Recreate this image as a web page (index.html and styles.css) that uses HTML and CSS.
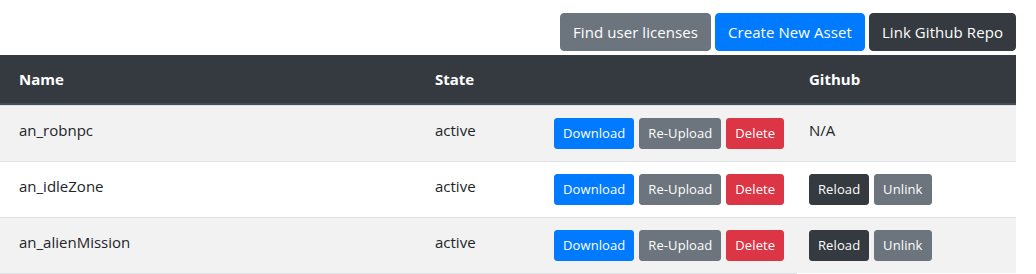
FILE: index.html
```html
<!DOCTYPE html>
<html lang="en">
<head>
    <meta charset="UTF-8">
    <title>Assets</title>
    <link rel="stylesheet" href="styles.css">
</head>
<body>
    <div class="page">
        <div class="toolbar">
            <button class="btn btn-secondary">Find user licenses</button>
            <button class="btn btn-primary">Create New Asset</button>
            <button class="btn btn-dark">Link Github Repo</button>
        </div>

        <table class="assets">
            <colgroup>
                <col class="col-name">
                <col class="col-state">
                <col class="col-actions">
                <col class="col-github">
            </colgroup>
            <thead>
                <tr>
                    <th>Name</th>
                    <th>State</th>
                    <th></th>
                    <th>Github</th>
                </tr>
            </thead>
            <tbody>
                <tr>
                    <td>an_robnpc</td>
                    <td>active</td>
                    <td class="actions">
                        <button class="btn btn-sm btn-primary">Download</button>
                        <button class="btn btn-sm btn-secondary">Re-Upload</button>
                        <button class="btn btn-sm btn-danger">Delete</button>
                    </td>
                    <td>N/A</td>
                </tr>
                <tr>
                    <td>an_idleZone</td>
                    <td>active</td>
                    <td class="actions">
                        <button class="btn btn-sm btn-primary">Download</button>
                        <button class="btn btn-sm btn-secondary">Re-Upload</button>
                        <button class="btn btn-sm btn-danger">Delete</button>
                    </td>
                    <td class="actions">
                        <button class="btn btn-sm btn-dark">Reload</button>
                        <button class="btn btn-sm btn-secondary">Unlink</button>
                    </td>
                </tr>
                <tr>
                    <td>an_alienMission</td>
                    <td>active</td>
                    <td class="actions">
                        <button class="btn btn-sm btn-primary">Download</button>
                        <button class="btn btn-sm btn-secondary">Re-Upload</button>
                        <button class="btn btn-sm btn-danger">Delete</button>
                    </td>
                    <td class="actions">
                        <button class="btn btn-sm btn-dark">Reload</button>
                        <button class="btn btn-sm btn-secondary">Unlink</button>
                    </td>
                </tr>
            </tbody>
        </table>
        <div class="scroll-edge"></div>
    </div>
</body>
</html>
```

FILE: styles.css
```css
/* General */
body {
    margin: 0;
    padding: 0;
    font-family: "Open Sans", "Noto Sans", sans-serif;
    font-size: 16px;
    line-height: 1.5;
    color: #212529;
    background-color: #fff;
}

.page {
    width: 1016px;
}

/* Buttons */
.btn {
    display: inline-block;
    font-family: inherit;
    font-size: 15px;
    line-height: 24px;
    padding: 6px 12px;
    border: 1px solid transparent;
    border-radius: 4px;
    color: #fff;
    cursor: pointer;
}

.btn-sm {
    font-size: 13px;
    line-height: 21px;
    padding: 4px 8px;
    border-radius: 3px;
}

.btn-primary {
    background-color: #007bff;
    border-color: #007bff;
}

.btn-secondary {
    background-color: #6c757d;
    border-color: #6c757d;
}

.btn-dark {
    background-color: #343a40;
    border-color: #343a40;
}

.btn-danger {
    background-color: #dc3545;
    border-color: #dc3545;
}

/* Top toolbar */
.toolbar {
    display: flex;
    justify-content: flex-end;
    gap: 4px;
    padding-top: 13px;
    margin-bottom: 4px;
}

.toolbar .btn {
    letter-spacing: 0.07px;
}

/* Table */
.assets {
    width: 1016px;
    border-collapse: separate;
    border-spacing: 0;
    table-layout: fixed;
}

.col-name { width: 416px; }
.col-state { width: 119px; }
.col-actions { width: 255px; }
.col-github { width: 226px; }

.assets th,
.assets td {
    padding: 12px 6px 12px 19px;
    text-align: left;
    vertical-align: top;
    font-size: 15px;
    line-height: 24px;
}

.assets th {
    background-color: #343a40;
    color: #fff;
    font-weight: 700;
    border-bottom: 2px solid #454d55;
}

.assets td {
    border-top: 1px solid #dee2e6;
}

.assets tbody tr:nth-child(odd) {
    background-color: #f2f2f2;
}

.assets td.actions {
    line-height: 0;
    white-space: nowrap;
    padding-right: 0;
}

.actions .btn {
    margin-right: 1px;
    letter-spacing: 0.1px;
}

.scroll-edge {
    width: 797px;
    border-top: 1px solid #dee2e6;
}
```
